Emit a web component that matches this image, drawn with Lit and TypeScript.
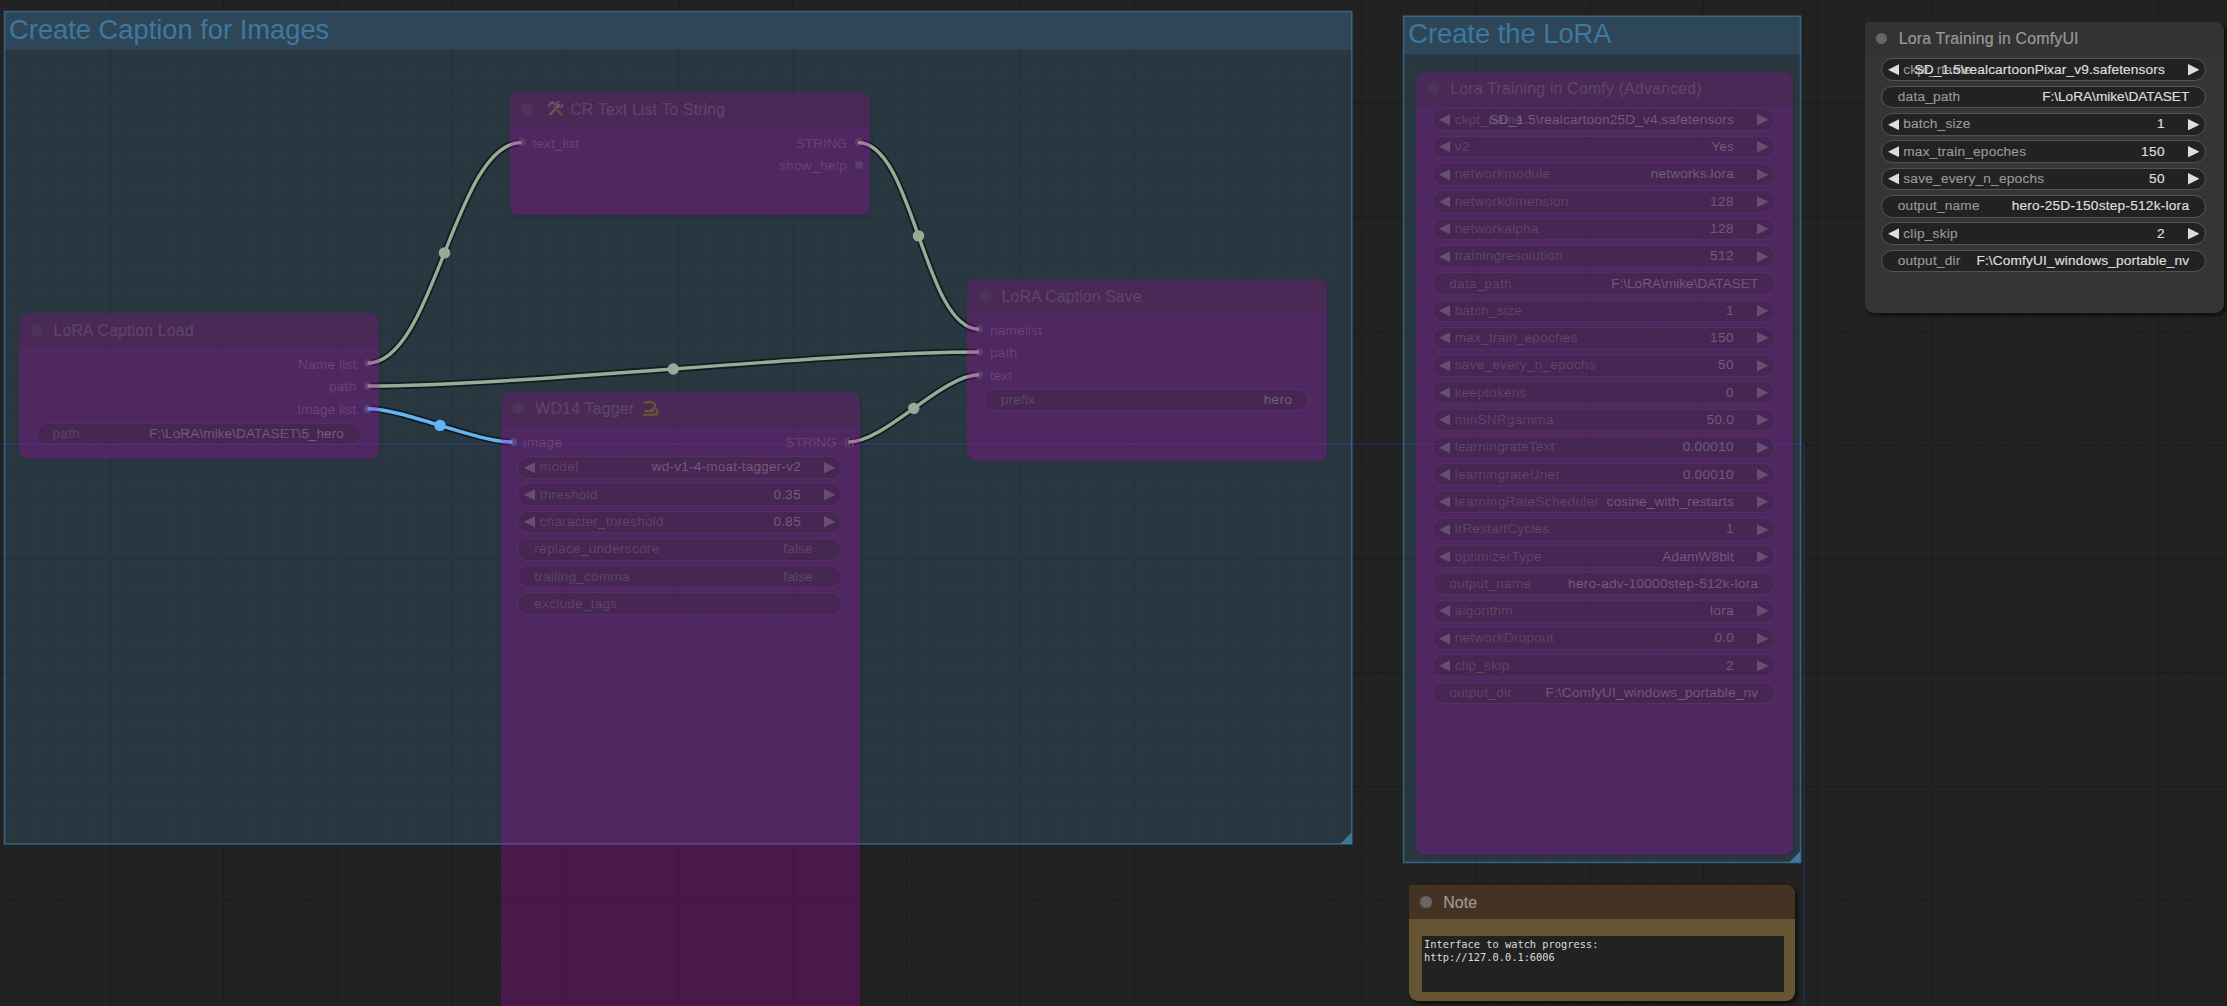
import { LitElement, html, svg, css, nothing } from "lit";
import { customElement, property } from "lit/decorators.js";
import { classMap } from "lit/directives/class-map.js";
import { styleMap } from "lit/directives/style-map.js";

type Kind = "combo" | "text" | "toggle";
interface Widget { kind: Kind; label: string; value?: string; }
interface Slot { name: string; color?: string; grid?: boolean; }
interface NodeData {
  x: number; y: number; w: number; h: number;
  title: string; icon?: "tools" | "snake"; mode?: "bypass" | "note" | "plain";
  inputs?: Slot[]; outputs?: Slot[]; widgets?: Widget[]; note?: string;
}
interface GroupData { x: number; y: number; w: number; h: number; title: string; }
interface LinkData { from: [number, number]; to: [number, number]; color: string; }

const c = (label: string, value: string): Widget => ({ kind: "combo", label, value });
const t = (label: string, value = ""): Widget => ({ kind: "text", label, value });
const b = (label: string, value: string): Widget => ({ kind: "toggle", label, value });
const BLUE = "rgba(100,181,246,.45)";

// Zoomed canvas text keeps the whole-pixel glyph advances of its unzoomed size.
const ZOOM = 1.138;
const WIDTHS: [string, number][] = [
  ["ijl", 0.222], [" :.\\ftI", 0.278], ["-()r", 0.333], ["cksvxyzJ", 0.5], ["FTZ", 0.611],
  ["ABEKPSVXY", 0.667], ["CDHNRUw", 0.722], ["GOQ", 0.778], ["mM", 0.833], ["W", 0.944],
];
function tracking(text: string, size: number): string {
  let extra = 0;
  for (const ch of text) {
    const w = (WIDTHS.find(([set]) => set.includes(ch))?.[1] ?? 0.556) * size;
    extra += Math.round(w) - w;
  }
  return `${((extra * ZOOM) / Math.max(text.length, 1)).toFixed(3)}px`;
}
const tracked = (cls: string, text: string, size: number) =>
  html`<span class=${cls} style=${styleMap({ letterSpacing: tracking(text, size) })}>${text}</span>`;

const NODES: NodeData[] = [
  { x: 19.3, y: 313.3, w: 359.4, h: 145.5, title: "LoRA Caption Load",
    outputs: [{ name: "Name list" }, { name: "path" }, { name: "Image list", color: BLUE }],
    widgets: [t("path", "F:\\LoRA\\mike\\DATASET\\5_hero")] },
  { x: 510, y: 92.3, w: 359.5, h: 123, title: "CR Text List To String", icon: "tools",
    inputs: [{ name: "text_list" }], outputs: [{ name: "STRING" }, { name: "show_help" }] },
  { x: 501, y: 392.2, w: 359, h: 640, title: "WD14 Tagger", icon: "snake",
    inputs: [{ name: "image", color: BLUE }], outputs: [{ name: "STRING", grid: true }],
    widgets: [c("model", "wd-v1-4-moat-tagger-v2"), c("threshold", "0.35"), c("character_threshold", "0.85"),
      b("replace_underscore", "false"), b("trailing_comma", "false"), t("exclude_tags")] },
  { x: 967.4, y: 279.3, w: 359.6, h: 181.7, title: "LoRA Caption Save",
    inputs: [{ name: "namelist" }, { name: "path" }, { name: "text" }], widgets: [t("prefix", "hero")] },
  { x: 1416, y: 72, w: 377, h: 783, title: "Lora Training in Comfy (Advanced)",
    widgets: [c("ckpt_name", "SD_1.5\\realcartoon25D_v4.safetensors"), c("v2", "Yes"), c("networkmodule", "networks.lora"),
      c("networkdimension", "128"), c("networkalpha", "128"), c("trainingresolution", "512"),
      t("data_path", "F:\\LoRA\\mike\\DATASET"), c("batch_size", "1"), c("max_train_epoches", "150"),
      c("save_every_n_epochs", "50"), c("keeptokens", "0"), c("minSNRgamma", "50.0"),
      c("learningrateText", "0.00010"), c("learningrateUnet", "0.00010"),
      c("learningRateScheduler", "cosine_with_restarts"), c("lrRestartCycles", "1"), c("optimizerType", "AdamW8bit"),
      t("output_name", "hero-adv-10000step-512k-lora"), c("algorithm", "lora"), c("networkDropout", "0.0"),
      c("clip_skip", "2"), t("output_dir", "F:\\ComfyUI_windows_portable_nv")] },
  { x: 1864.5, y: 22, w: 359.5, h: 291, title: "Lora Training in ComfyUI", mode: "plain",
    widgets: [c("ckpt_name", "SD_1.5\\realcartoonPixar_v9.safetensors"), t("data_path", "F:\\LoRA\\mike\\DATASET"),
      c("batch_size", "1"), c("max_train_epoches", "150"), c("save_every_n_epochs", "50"),
      t("output_name", "hero-25D-150step-512k-lora"), c("clip_skip", "2"),
      t("output_dir", "F:\\ComfyUI_windows_portable_nv")] },
  { x: 1409, y: 885.3, w: 386, h: 115.7, title: "Note", mode: "note",
    note: "Interface to watch progress:\nhttp://127.0.0.1:6006" },
];

const GROUPS: GroupData[] = [
  { x: 4.5, y: 11.5, w: 1347.2, h: 832.4, title: "Create Caption for Images" },
  { x: 1403.6, y: 16.2, w: 397, h: 846.3, title: "Create the LoRA" },
];

const GREEN = "#99aa99";
const LINKS: LinkData[] = [
  { from: [367.5, 363.2], to: [521.5, 142.5], color: GREEN },
  { from: [367.5, 386], to: [979, 352], color: GREEN },
  { from: [367.5, 408.8], to: [512.5, 442], color: "#64b5f6" },
  { from: [858, 142.5], to: [979, 329.2], color: GREEN },
  { from: [848.5, 442], to: [979, 374.7], color: GREEN },
];

@customElement("flow-widget")
export class FlowWidget extends LitElement {
  @property({ attribute: false }) data!: Widget;
  static styles = css`
    :host { display: block; height: 22.76px; }
    .pill { box-sizing: border-box; height: 100%; border-radius: 12px; border: 1.14px solid var(--outline);
      background: var(--field); background-clip: padding-box; display: flex; align-items: center;
      padding: 0 5.7px; color: var(--value); }
    .pill.combo { gap: 4.3px; }
    .pill.text { padding: 0 15.9px; }
    .pill.toggle { padding: 0 8.2px 0 15.9px; gap: 3.7px; }
    .arrow { flex: none; width: 11.4px; height: 11.4px; fill: var(--arrow); }
    .texts { flex: 1; min-width: 0; display: grid; align-items: center; font-size: 13.66px; line-height: 20px; white-space: pre; }
    .combo .texts { padding-right: 18.8px; }
    .label { grid-area: 1 / 1; justify-self: start; color: var(--label); -webkit-text-stroke: .15px currentColor; }
    .value { grid-area: 1 / 1; justify-self: end; -webkit-text-stroke: .2px currentColor; }
    .toggle .value { color: var(--label); }
    .knob { flex: none; width: 16.4px; height: 16.4px; border-radius: 50%; background: var(--knob); }
  `;
  render() {
    const { kind, label, value } = this.data;
    const combo = kind === "combo";
    return html`<div class=${classMap({ pill: true, [kind]: true })}>
      ${combo ? html`<svg class="arrow" viewBox="0 0 10 10"><path d="M10 0V10L0 5Z" /></svg>` : nothing}
      <div class="texts">${tracked("label", label, 12)}${value ? tracked("value", value, 12) : nothing}</div>
      ${combo ? html`<svg class="arrow" viewBox="0 0 10 10"><path d="M0 0V10L10 5Z" /></svg>` : nothing}
      ${kind === "toggle" ? html`<span class="knob"></span>` : nothing}
    </div>`;
  }
}

@customElement("flow-node")
export class FlowNode extends LitElement {
  @property({ attribute: false }) data!: NodeData;
  static styles = css`
    :host { display: block; }
    .node { box-sizing: border-box; height: 100%; border-radius: 9px; display: flex; flex-direction: column; overflow: hidden;
      background: var(--body); color: var(--title-text); }
    .bypass { --body: rgba(182,0,182,.28); --head: rgba(51,51,51,.2); --title-text: rgba(153,153,153,.25);
      --dot: rgba(102,102,102,.2); --slot-text: rgba(170,170,170,.23); --field: rgba(34,34,34,.2);
      --outline: rgba(102,102,102,.16); --label: rgba(153,153,153,.25); --value: rgba(221,221,221,.25);
      --arrow: rgba(221,221,221,.22); --knob: rgba(51,51,51,.2); --pin: rgba(119,153,119,.25);
      box-shadow: 1px 1px 3px rgba(0,0,0,.1); }
    .plain { --body: #353535; --head: #333; --title-text: #999; --dot: #666; --field: #222; --outline: #525252;
      --label: #999; --value: #ddd; --arrow: #ddd; --knob: #333; box-shadow: 2.3px 2.3px 3.4px rgba(0,0,0,.5); }
    .note { --body: #665533; --head: #443322; --title-text: #999; --dot: #666; box-shadow: 2.3px 2.3px 3.4px rgba(0,0,0,.5); }
    .plain, .note { border-top-left-radius: 3px; }
    .head { flex: none; height: 34.15px; background: var(--head); display: flex; align-items: center; padding-left: 11.4px;
      border-bottom: 1px solid rgba(0,0,0,.04); box-sizing: border-box; }
    .dot { flex: none; width: 11.4px; height: 11.4px; border-radius: 50%; background: var(--dot); margin-right: 11.4px; }
    .title { font-size: 15.93px; line-height: 20px; white-space: pre; padding-top: 1.4px; -webkit-text-stroke: .2px currentColor; }
    .icon { flex: none; width: 17px; height: 17px; }
    .icon.tools { margin: 0 6px 0 3px; }
    .icon.snake { margin-left: 8px; }
    .slots { flex: none; display: flex; justify-content: space-between; padding: 4.6px 6.4px 0 7.6px; color: var(--slot-text); }
    .column { display: flex; flex-direction: column; }
    .slot { height: 22.76px; display: flex; align-items: center; gap: 7px; font-size: 13.66px; white-space: pre; }
    .name { padding-top: 1.2px; -webkit-text-stroke: .15px currentColor; }
    .outputs .slot { flex-direction: row-reverse; gap: 8px; }
    .pin { width: 8px; height: 8px; border-radius: 50%; background: var(--pin); }
    .pin.blue { background: rgba(100,181,246,.25); }
    .pin.grid { width: 9px; height: 9px; border-radius: 0;
      background: repeating-linear-gradient(90deg, var(--pin) 0 2px, transparent 2px 3.5px); }
    .widgets { display: flex; flex-direction: column; gap: 4.55px; padding: 2.3px 17.9px 0 16.4px; }
    .area { flex: 1; margin: 16.5px 11px 9px 13px; background: #222; color: #ddd; padding: 2px;
      font: 10.35px/13px "DejaVu Sans Mono", monospace; white-space: pre; }
  `;
  private icon(name?: string) {
    if (name === "tools") return html`<svg class="icon tools" viewBox="0 0 18 18" fill="none" stroke-linecap="round">
      <path d="M3.5 15L13 5" stroke="#66596e" stroke-width="2.2" /><path d="M12.5 1.8A3 3 0 1 0 16.2 5.4" stroke="#66596e" stroke-width="1.7" />
      <path d="M7.5 7.5L16 16" stroke="#794438" stroke-width="2.3" /><path d="M2 5.5L5.5 2.2L8 4.6" stroke="#66596a" stroke-width="2.2" /></svg>`;
    if (name === "snake") return html`<svg class="icon snake" viewBox="0 0 18 18" fill="none" stroke="#67582f" stroke-linecap="round" stroke-linejoin="round">
      <path d="M3.6 3C6.5 1.4 14 1.4 14 5.6C14 8.4 12 9.2 9.6 11" stroke-width="2.3" />
      <path d="M3.5 11.8H12M2.2 15.6H13.5C17 15 17.4 11.2 15 9.8" stroke-width="2.3" />
      <path d="M1.2 3.6L2.8 3.2" stroke="#7c3040" stroke-width="1.2" /></svg>`;
    return nothing;
  }
  private column(cls: string, slots: Slot[]) {
    return html`<div class="column ${cls}">${slots.map((s) => html`<div class="slot">
      <span class=${classMap({ pin: true, blue: !!s.color, grid: !!s.grid })}></span>${tracked("name", s.name, 12)}</div>`)}</div>`;
  }
  render() {
    const d = this.data;
    return html`<div class="node ${d.mode ?? "bypass"}">
      <div class="head"><span class="dot"></span>${d.icon === "tools" ? this.icon(d.icon) : nothing}${tracked("title", d.title, 14)}${d.icon === "snake" ? this.icon(d.icon) : nothing}</div>
      ${d.inputs || d.outputs ? html`<div class="slots">${this.column("inputs", d.inputs ?? [])}${this.column("outputs", d.outputs ?? [])}</div>` : nothing}
      ${d.widgets ? html`<div class="widgets">${d.widgets.map((w) => html`<flow-widget .data=${w}></flow-widget>`)}</div>` : nothing}
      ${d.note ? html`<div class="area">${d.note}</div>` : nothing}
    </div>`;
  }
}

@customElement("app-root")
export class AppRoot extends LitElement {
  static styles = css`
    :host { display: block; }
    .canvas { position: relative; width: 2227px; height: 1006px; overflow: hidden; background: #222;
      font-family: "Liberation Sans", Arial, sans-serif; }
    .layer { position: absolute; inset: 0; width: 2227px; height: 1006px; }
    .place { position: absolute; }
    .group-title { font-size: 27.3px; fill: #3f789e; }
  `;
  private group(g: GroupData) {
    const r = g.x + g.w, bt = g.y + g.h;
    return svg`<rect x=${g.x} y=${g.y} width=${g.w} height="38.3" fill="#3f789e" fill-opacity=".25" />
      <rect x=${g.x} y=${g.y} width=${g.w} height=${g.h} fill="#3f789e" fill-opacity=".25" />
      <rect x=${g.x} y=${g.y} width=${g.w} height=${g.h} fill="none" stroke="#3f789e" stroke-width="1.6" stroke-opacity=".7" />
      <path d="M${r} ${bt}H${r - 11.4}L${r} ${bt - 11.4}Z" fill="#3f789e" />
      <text class="group-title" x=${g.x + 4.6} y=${g.y + 27}>${g.title}</text>`;
  }
  private link(l: LinkData) {
    const [x1, y1] = l.from, [x2, y2] = l.to;
    const k = Math.hypot(x2 - x1, y2 - y1) * 0.25;
    const d = `M${x1} ${y1}C${x1 + k} ${y1} ${x2 - k} ${y2} ${x2} ${y2}`;
    return svg`<path d=${d} fill="none" stroke="#000" stroke-opacity=".5" stroke-width="7" />
      <path d=${d} fill="none" stroke=${l.color} stroke-width="3.4" />
      <circle cx=${(x1 + x2) / 2} cy=${(y1 + y2) / 2} r="5.7" fill=${l.color} />`;
  }
  render() {
    return html`<div class="canvas">
      <svg class="layer" viewBox="0 0 2227 1006">
        <defs>
          <pattern id="minor" width="11.38" height="11.38" x="109.3" y="217" patternUnits="userSpaceOnUse">
            <path d="M0 .5H11.38M.5 0V11.38" stroke="#000" stroke-opacity=".07" />
          </pattern>
          <pattern id="major" width="113.83" height="113.83" x="109.3" y="216.7" patternUnits="userSpaceOnUse">
            <path d="M0 .7H113.83M.7 0V113.83" stroke="#000" stroke-opacity=".13" stroke-width="1.4" />
          </pattern>
        </defs>
        <rect width="2227" height="1006" fill="url(#minor)" />
        <rect width="2227" height="1006" fill="url(#major)" />
        <path d="M0 444.2H1804V1006" fill="none" stroke="#22346a" stroke-opacity=".85" stroke-width="1.2" />
        ${GROUPS.map((g) => this.group(g))}
        ${LINKS.map((l) => this.link(l))}
      </svg>
      ${NODES.map((n) => html`<flow-node class="place" .data=${n}
        style=${styleMap({ left: `${n.x}px`, top: `${n.y}px`, width: `${n.w}px`, height: `${n.h}px` })}></flow-node>`)}
    </div>`;
  }
}
